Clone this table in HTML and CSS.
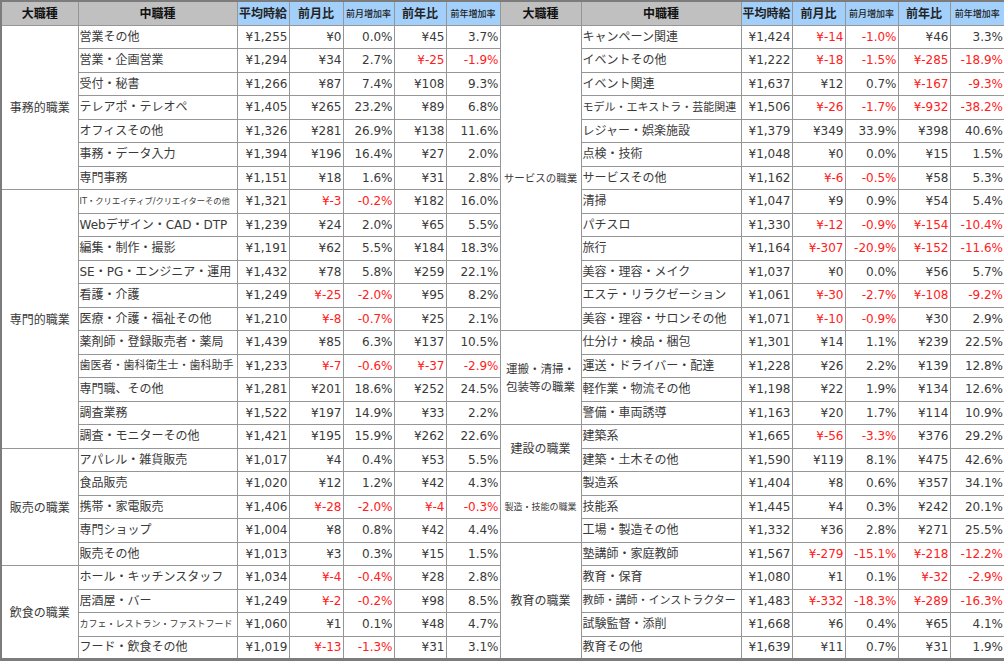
FILE: index.html
```html
<!DOCTYPE html>
<html lang="ja">
<head>
<meta charset="utf-8">
<link rel="stylesheet" href="styles.css">
</head>
<body>
<table class="wage">
<colgroup>
<col class="c-big-l"><col class="c-mid-l"><col class="c-avg"><col class="c-mom"><col class="c-momr"><col class="c-yoy"><col class="c-yoyr">
<col class="c-big-r"><col class="c-mid-r"><col class="c-avg-r"><col class="c-mom-r"><col class="c-momr-r"><col class="c-yoy-r"><col class="c-yoyr-r">
</colgroup>
<thead>
<tr class="head">
<th class="hg">大職種</th><th class="hg">中職種</th><th class="hb">平均時給</th><th class="hb">前月比</th><th class="hb hs">前月増加率</th><th class="hb">前年比</th><th class="hb hs">前年増加率</th>
<th class="hg">大職種</th><th class="hg">中職種</th><th class="hb">平均時給</th><th class="hb">前月比</th><th class="hb hs">前月増加率</th><th class="hb">前年比</th><th class="hb hs">前年増加率</th>
</tr>
</thead>
<tbody>
<tr>
<td class="big" rowspan="7">事務的職業</td><td class="mid">営業その他</td><td class="num">¥1,255</td><td class="num">¥0</td><td class="num">0.0%</td><td class="num">¥45</td><td class="num">3.7%</td>
<td class="big narrow" rowspan="13">サービスの職業</td><td class="mid">キャンペーン関連</td><td class="num">¥1,424</td><td class="num r">¥-14</td><td class="num r">-1.0%</td><td class="num">¥46</td><td class="num">3.3%</td>
</tr>
<tr>
<td class="mid">営業・企画営業</td><td class="num">¥1,294</td><td class="num">¥34</td><td class="num">2.7%</td><td class="num r">¥-25</td><td class="num r">-1.9%</td>
<td class="mid">イベントその他</td><td class="num">¥1,222</td><td class="num r">¥-18</td><td class="num r">-1.5%</td><td class="num r">¥-285</td><td class="num r">-18.9%</td>
</tr>
<tr>
<td class="mid">受付・秘書</td><td class="num">¥1,266</td><td class="num">¥87</td><td class="num">7.4%</td><td class="num">¥108</td><td class="num">9.3%</td>
<td class="mid">イベント関連</td><td class="num">¥1,637</td><td class="num">¥12</td><td class="num">0.7%</td><td class="num r">¥-167</td><td class="num r">-9.3%</td>
</tr>
<tr>
<td class="mid">テレアポ・テレオペ</td><td class="num">¥1,405</td><td class="num">¥265</td><td class="num">23.2%</td><td class="num">¥89</td><td class="num">6.8%</td>
<td class="mid long">モデル・エキストラ・芸能関連</td><td class="num">¥1,506</td><td class="num r">¥-26</td><td class="num r">-1.7%</td><td class="num r">¥-932</td><td class="num r">-38.2%</td>
</tr>
<tr>
<td class="mid">オフィスその他</td><td class="num">¥1,326</td><td class="num">¥281</td><td class="num">26.9%</td><td class="num">¥138</td><td class="num">11.6%</td>
<td class="mid">レジャー・娯楽施設</td><td class="num">¥1,379</td><td class="num">¥349</td><td class="num">33.9%</td><td class="num">¥398</td><td class="num">40.6%</td>
</tr>
<tr>
<td class="mid">事務・データ入力</td><td class="num">¥1,394</td><td class="num">¥196</td><td class="num">16.4%</td><td class="num">¥27</td><td class="num">2.0%</td>
<td class="mid">点検・技術</td><td class="num">¥1,048</td><td class="num">¥0</td><td class="num">0.0%</td><td class="num">¥15</td><td class="num">1.5%</td>
</tr>
<tr>
<td class="mid">専門事務</td><td class="num">¥1,151</td><td class="num">¥18</td><td class="num">1.6%</td><td class="num">¥31</td><td class="num">2.8%</td>
<td class="mid">サービスその他</td><td class="num">¥1,162</td><td class="num r">¥-6</td><td class="num r">-0.5%</td><td class="num">¥58</td><td class="num">5.3%</td>
</tr>
<tr>
<td class="big" rowspan="11">専門的職業</td><td class="mid xs">IT・クリエイティブ/クリエイターその他</td><td class="num">¥1,321</td><td class="num r">¥-3</td><td class="num r">-0.2%</td><td class="num">¥182</td><td class="num">16.0%</td>
<td class="mid">清掃</td><td class="num">¥1,047</td><td class="num">¥9</td><td class="num">0.9%</td><td class="num">¥54</td><td class="num">5.4%</td>
</tr>
<tr>
<td class="mid">Webデザイン・CAD・DTP</td><td class="num">¥1,239</td><td class="num">¥24</td><td class="num">2.0%</td><td class="num">¥65</td><td class="num">5.5%</td>
<td class="mid">パチスロ</td><td class="num">¥1,330</td><td class="num r">¥-12</td><td class="num r">-0.9%</td><td class="num r">¥-154</td><td class="num r">-10.4%</td>
</tr>
<tr>
<td class="mid">編集・制作・撮影</td><td class="num">¥1,191</td><td class="num">¥62</td><td class="num">5.5%</td><td class="num">¥184</td><td class="num">18.3%</td>
<td class="mid">旅行</td><td class="num">¥1,164</td><td class="num r">¥-307</td><td class="num r">-20.9%</td><td class="num r">¥-152</td><td class="num r">-11.6%</td>
</tr>
<tr>
<td class="mid">SE・PG・エンジニア・運用</td><td class="num">¥1,432</td><td class="num">¥78</td><td class="num">5.8%</td><td class="num">¥259</td><td class="num">22.1%</td>
<td class="mid">美容・理容・メイク</td><td class="num">¥1,037</td><td class="num">¥0</td><td class="num">0.0%</td><td class="num">¥56</td><td class="num">5.7%</td>
</tr>
<tr>
<td class="mid">看護・介護</td><td class="num">¥1,249</td><td class="num r">¥-25</td><td class="num r">-2.0%</td><td class="num">¥95</td><td class="num">8.2%</td>
<td class="mid">エステ・リラクゼーション</td><td class="num">¥1,061</td><td class="num r">¥-30</td><td class="num r">-2.7%</td><td class="num r">¥-108</td><td class="num r">-9.2%</td>
</tr>
<tr>
<td class="mid">医療・介護・福祉その他</td><td class="num">¥1,210</td><td class="num r">¥-8</td><td class="num r">-0.7%</td><td class="num">¥25</td><td class="num">2.1%</td>
<td class="mid">美容・理容・サロンその他</td><td class="num">¥1,071</td><td class="num r">¥-10</td><td class="num r">-0.9%</td><td class="num">¥30</td><td class="num">2.9%</td>
</tr>
<tr>
<td class="mid">薬剤師・登録販売者・薬局</td><td class="num">¥1,439</td><td class="num">¥85</td><td class="num">6.3%</td><td class="num">¥137</td><td class="num">10.5%</td>
<td class="big two" rowspan="4">運搬・清掃・<br>包装等の職業</td><td class="mid">仕分け・検品・梱包</td><td class="num">¥1,301</td><td class="num">¥14</td><td class="num">1.1%</td><td class="num">¥239</td><td class="num">22.5%</td>
</tr>
<tr>
<td class="mid sm">歯医者・歯科衛生士・歯科助手</td><td class="num">¥1,233</td><td class="num r">¥-7</td><td class="num r">-0.6%</td><td class="num r">¥-37</td><td class="num r">-2.9%</td>
<td class="mid">運送・ドライバー・配達</td><td class="num">¥1,228</td><td class="num">¥26</td><td class="num">2.2%</td><td class="num">¥139</td><td class="num">12.8%</td>
</tr>
<tr>
<td class="mid">専門職、その他</td><td class="num">¥1,281</td><td class="num">¥201</td><td class="num">18.6%</td><td class="num">¥252</td><td class="num">24.5%</td>
<td class="mid">軽作業・物流その他</td><td class="num">¥1,198</td><td class="num">¥22</td><td class="num">1.9%</td><td class="num">¥134</td><td class="num">12.6%</td>
</tr>
<tr>
<td class="mid">調査業務</td><td class="num">¥1,522</td><td class="num">¥197</td><td class="num">14.9%</td><td class="num">¥33</td><td class="num">2.2%</td>
<td class="mid">警備・車両誘導</td><td class="num">¥1,163</td><td class="num">¥20</td><td class="num">1.7%</td><td class="num">¥114</td><td class="num">10.9%</td>
</tr>
<tr>
<td class="mid">調査・モニターその他</td><td class="num">¥1,421</td><td class="num">¥195</td><td class="num">15.9%</td><td class="num">¥262</td><td class="num">22.6%</td>
<td class="big" rowspan="2">建設の職業</td><td class="mid">建築系</td><td class="num">¥1,665</td><td class="num r">¥-56</td><td class="num r">-3.3%</td><td class="num">¥376</td><td class="num">29.2%</td>
</tr>
<tr>
<td class="big" rowspan="5">販売の職業</td><td class="mid">アパレル・雑貨販売</td><td class="num">¥1,017</td><td class="num">¥4</td><td class="num">0.4%</td><td class="num">¥53</td><td class="num">5.5%</td>
<td class="mid">建築・土木その他</td><td class="num">¥1,590</td><td class="num">¥119</td><td class="num">8.1%</td><td class="num">¥475</td><td class="num">42.6%</td>
</tr>
<tr>
<td class="mid">食品販売</td><td class="num">¥1,020</td><td class="num">¥12</td><td class="num">1.2%</td><td class="num">¥42</td><td class="num">4.3%</td>
<td class="big xsb" rowspan="3">製造・技能の職業</td><td class="mid">製造系</td><td class="num">¥1,404</td><td class="num">¥8</td><td class="num">0.6%</td><td class="num">¥357</td><td class="num">34.1%</td>
</tr>
<tr>
<td class="mid">携帯・家電販売</td><td class="num">¥1,406</td><td class="num r">¥-28</td><td class="num r">-2.0%</td><td class="num r">¥-4</td><td class="num r">-0.3%</td>
<td class="mid">技能系</td><td class="num">¥1,445</td><td class="num">¥4</td><td class="num">0.3%</td><td class="num">¥242</td><td class="num">20.1%</td>
</tr>
<tr>
<td class="mid">専門ショップ</td><td class="num">¥1,004</td><td class="num">¥8</td><td class="num">0.8%</td><td class="num">¥42</td><td class="num">4.4%</td>
<td class="mid">工場・製造その他</td><td class="num">¥1,332</td><td class="num">¥36</td><td class="num">2.8%</td><td class="num">¥271</td><td class="num">25.5%</td>
</tr>
<tr>
<td class="mid">販売その他</td><td class="num">¥1,013</td><td class="num">¥3</td><td class="num">0.3%</td><td class="num">¥15</td><td class="num">1.5%</td>
<td class="big" rowspan="5">教育の職業</td><td class="mid">塾講師・家庭教師</td><td class="num">¥1,567</td><td class="num r">¥-279</td><td class="num r">-15.1%</td><td class="num r">¥-218</td><td class="num r">-12.2%</td>
</tr>
<tr>
<td class="big" rowspan="4">飲食の職業</td><td class="mid">ホール・キッチンスタッフ</td><td class="num">¥1,034</td><td class="num r">¥-4</td><td class="num r">-0.4%</td><td class="num">¥28</td><td class="num">2.8%</td>
<td class="mid">教育・保育</td><td class="num">¥1,080</td><td class="num">¥1</td><td class="num">0.1%</td><td class="num r">¥-32</td><td class="num r">-2.9%</td>
</tr>
<tr>
<td class="mid">居酒屋・バー</td><td class="num">¥1,249</td><td class="num r">¥-2</td><td class="num r">-0.2%</td><td class="num">¥98</td><td class="num">8.5%</td>
<td class="mid long">教師・講師・インストラクター</td><td class="num">¥1,483</td><td class="num r">¥-332</td><td class="num r">-18.3%</td><td class="num r">¥-289</td><td class="num r">-16.3%</td>
</tr>
<tr>
<td class="mid xs2">カフェ・レストラン・ファストフード</td><td class="num">¥1,060</td><td class="num">¥1</td><td class="num">0.1%</td><td class="num">¥48</td><td class="num">4.7%</td>
<td class="mid">試験監督・添削</td><td class="num">¥1,668</td><td class="num">¥6</td><td class="num">0.4%</td><td class="num">¥65</td><td class="num">4.1%</td>
</tr>
<tr>
<td class="mid">フード・飲食その他</td><td class="num">¥1,019</td><td class="num r">¥-13</td><td class="num r">-1.3%</td><td class="num">¥31</td><td class="num">3.1%</td>
<td class="mid">教育その他</td><td class="num">¥1,639</td><td class="num">¥11</td><td class="num">0.7%</td><td class="num">¥31</td><td class="num">1.9%</td>
</tr>
</tbody>
</table>
</body>
</html>
```
FILE: styles.css
```css
html, body {
  margin: 0;
  padding: 0;
  background: #ffffff;
}

.wage {
  width: 1004px;
  border-collapse: collapse;
  table-layout: fixed;
  border: 2px solid #7c7c7c;
  border-bottom-width: 3px;
  font-family: "DejaVu Sans", "Noto Sans CJK JP", sans-serif;
  font-size: 12px;
  color: #3a3a3a;
}

.c-big-l { width: 77px; }
.c-mid-l { width: 159px; }
.c-avg { width: 52px; }
.c-mom { width: 54px; }
.c-momr { width: 51px; }
.c-yoy { width: 52px; }
.c-yoyr { width: 54px; }
.c-big-r { width: 81px; }
.c-mid-r { width: 160px; }
.c-avg-r { width: 51px; }
.c-mom-r { width: 53px; }
.c-momr-r { width: 53px; }
.c-yoy-r { width: 52px; }
.c-yoyr-r { width: 55px; }

.wage th,
.wage td {
  border: 1px solid #969696;
  padding: 0;
  line-height: 1;
  vertical-align: middle;
  white-space: nowrap;
  overflow: hidden;
}

.head {
  height: 24px;
}

.wage tbody tr {
  height: 23.5px;
}

.wage .hg {
  background: #c0c0c0;
  color: #111;
  font-family: "Noto Sans CJK JP", sans-serif;
  font-weight: 700;
  font-size: 12px;
  text-align: center;
}

.wage .hb {
  background: #a3d0fb;
  color: #222;
  font-family: "Noto Sans CJK JP", sans-serif;
  font-weight: 700;
  font-size: 12px;
  text-align: center;
}

.wage .hs {
  font-size: 9px;
  font-weight: 500;
}

.wage .big {
  text-align: center;
  font-family: "Noto Sans CJK JP", sans-serif;
  font-size: 12px;
}

.wage .big.narrow {
  font-size: 10.5px;
}

.wage .big.two {
  font-size: 11.5px;
  line-height: 1.5;
}

.wage .big.xsb {
  font-size: 9px;
}

.wage .mid {
  text-align: left;
  padding-left: 1px;
}

.wage .mid.long {
  font-size: 11px;
}

.wage .mid.xs {
  font-size: 8.3px;
}

.wage .mid.xs2 {
  font-size: 9px;
}

.wage .mid.sm {
  font-size: 11px;
}

.wage .num {
  text-align: right;
  padding-right: 1px;
}

.wage .r {
  color: #ff2020;
}
```
